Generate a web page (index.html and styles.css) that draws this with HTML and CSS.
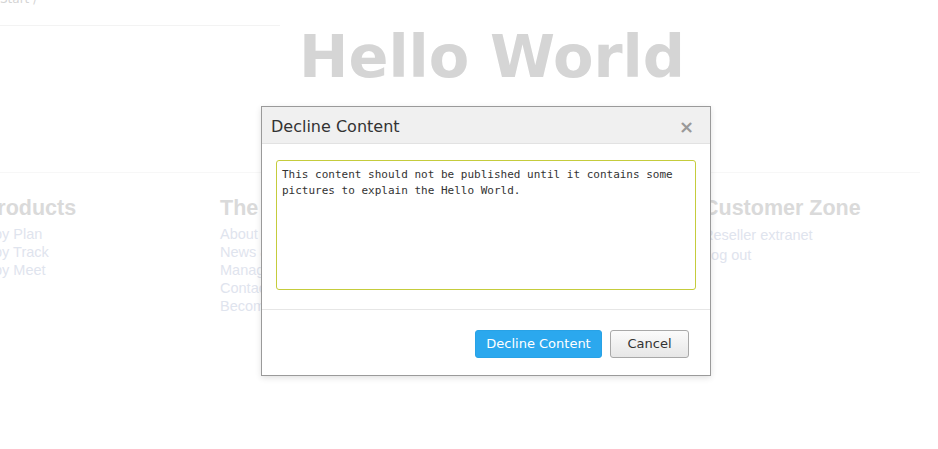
FILE: index.html
```html
<!DOCTYPE html>
<html lang="en">
<head>
<meta charset="utf-8">
<title>Decline Content</title>
<link rel="stylesheet" href="styles.css">
</head>
<body>
<div class="page">
  <div class="top">
    <div class="sidebar">
      <div class="crumb">Start /</div>
    </div>
    <div class="main">
      <h1 class="hello">Hello World</h1>
    </div>
  </div>
  <div class="divider"></div>
  <div class="footer">
    <div class="col col-products">
      <h2>Products</h2>
      <a>by Plan</a>
      <a>by Track</a>
      <a>by Meet</a>
    </div>
    <div class="col">
      <h2>The Company</h2>
      <a>About us</a>
      <a>News &amp; Events</a>
      <a>Management</a>
      <a>Contact</a>
      <a>Become a partner</a>
    </div>
    <div class="col">
      <h2>Support</h2>
      <a>Help</a>
    </div>
    <div class="col col-zone">
      <h2>Customer Zone</h2>
      <a>Reseller extranet</a>
      <a>Log out</a>
    </div>
  </div>
</div>

<div class="dialog" role="dialog" aria-labelledby="dlg-title">
  <div class="dialog-header">
    <span id="dlg-title" class="dialog-title">Decline Content</span>
    <span class="dialog-close">&times;</span>
  </div>
  <div class="dialog-body">
    <textarea class="reason">This content should not be published until it contains some pictures to explain the Hello World.</textarea>
  </div>
  <div class="dialog-footer">
    <button class="btn btn-primary">Decline Content</button>
    <button class="btn btn-default">Cancel</button>
  </div>
</div>
</body>
</html>
```

FILE: styles.css
```css
html, body {
  margin: 0;
  padding: 0;
  background: #fff;
}

body {
  font-family: "Liberation Sans", Arial, sans-serif;
  overflow: hidden;
  height: 449px;
  position: relative;
}

.page {
  width: 938px;
}

.top {
  display: flex;
  height: 172px;
}

.sidebar {
  width: 280px;
  flex: none;
}

.crumb {
  box-sizing: border-box;
  height: 34px;
  margin-top: -8px;
  border-bottom: 1px solid #f3f3f3;
  font-family: "DejaVu Sans", Verdana, sans-serif;
  font-size: 12px;
  line-height: 14px;
  color: #d4d4d4;
}

.main {
  width: 424px;
  text-align: center;
}

.hello {
  margin: 22px 0 0;
  font-family: "DejaVu Sans", Verdana, sans-serif;
  font-weight: bold;
  font-size: 59px;
  line-height: 70px;
  color: #d5d5d5;
  white-space: nowrap;
}

.divider {
  width: 920px;
  border-top: 1px solid #f7f7f7;
}

.footer {
  display: grid;
  grid-template-columns: 234px 238px 245px auto;
  margin-left: -14px;
  padding-top: 22px;
}

.col h2 {
  margin: 0 0 4px;
  font-size: 21.5px;
  line-height: 26px;
  font-weight: bold;
  color: #dadada;
  white-space: nowrap;
}

.col-products h2 {
  margin-left: -3px;
}

.col a {
  display: block;
  font-size: 14.5px;
  line-height: 18px;
  color: #dfe4ee;
  white-space: nowrap;
}

.col-products a {
  padding-left: 8px;
}

.col-zone a {
  line-height: 20px;
}

/* dialog */
.dialog {
  position: absolute;
  left: 261px;
  top: 106px;
  width: 450px;
  height: 270px;
  box-sizing: border-box;
  border: 1px solid #9a9a9a;
  background: #fff;
  box-shadow: 0 2px 6px rgba(0, 0, 0, 0.12);
  display: flex;
  flex-direction: column;
  font-family: "DejaVu Sans", Verdana, sans-serif;
}

.dialog-header {
  height: 36px;
  box-sizing: border-box;
  flex: none;
  background: #f0f0f0;
  border-bottom: 1px solid #e2e2e2;
  display: flex;
  align-items: center;
  justify-content: space-between;
  padding: 3px 16px 0 9px;
  height: 37px;
}

.dialog-title {
  font-size: 16px;
  color: #333;
  line-height: 20px;
}

.dialog-close {
  font-size: 18px;
  line-height: 20px;
  color: #999;
  font-weight: bold;
}

.dialog-body {
  padding: 16px 14px 19px;
  border-bottom: 1px solid #e6e6e6;
}

.reason {
  display: block;
  width: 420px;
  height: 130px;
  box-sizing: border-box;
  margin: 0;
  border: 1px solid #c5cc3c;
  border-radius: 3px;
  padding: 6px 5px 5px;
  font-family: "DejaVu Sans Mono", monospace;
  font-size: 11px;
  line-height: 16px;
  color: #333;
  resize: none;
  outline: none;
  background: #fff;
}

.dialog-footer {
  flex: 1;
  display: flex;
  justify-content: flex-end;
  align-items: flex-start;
  gap: 8px;
  padding: 20px 21px 0 0;
}

.btn {
  height: 28px;
  box-sizing: border-box;
  border-radius: 3px;
  font-family: "DejaVu Sans", Verdana, sans-serif;
  font-size: 13px;
  line-height: 16px;
  padding: 0;
  cursor: pointer;
}

.btn-primary {
  width: 127px;
  background: #2ba8ee;
  border: 1px solid #28a2e6;
  color: #fff;
}

.btn-default {
  width: 79px;
  background: linear-gradient(#fbfbfb, #e7e7e7);
  border: 1px solid #a8a8a8;
  color: #333;
}
```
